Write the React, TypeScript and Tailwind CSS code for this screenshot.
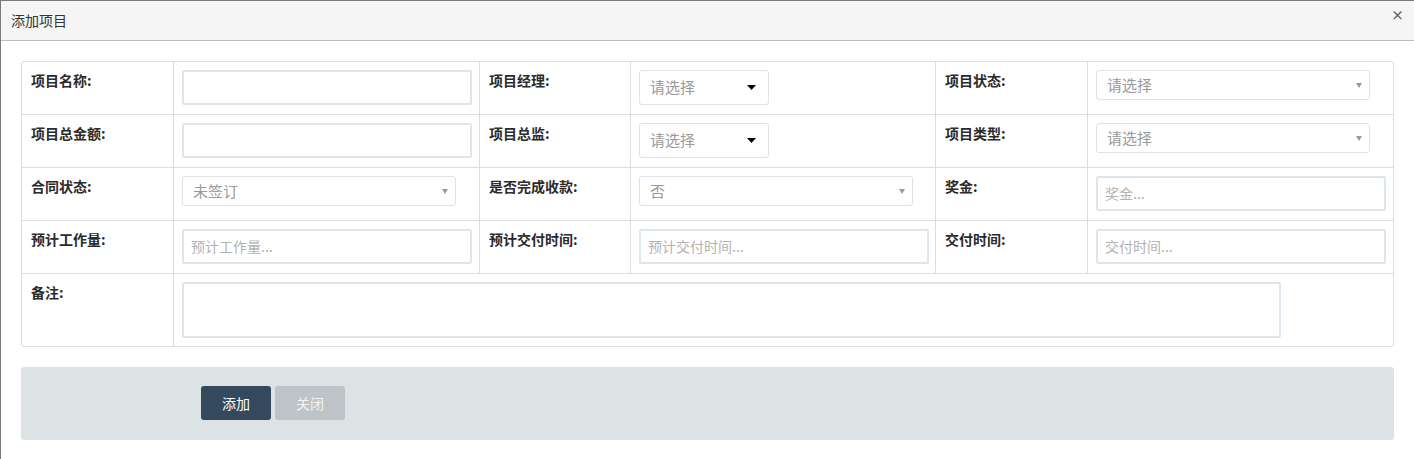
import React from "react";

// add-project dialog: header, 6-column form grid, footer with buttons

const font = { fontFamily: '"Noto Sans CJK SC", "Noto Sans", sans-serif' };

const Label = ({ text, last }: { text: string; last?: boolean }) => (
  <div className={`border-r border-[#ddd] pl-[9px] pt-[8px] text-[14px] leading-[20px] font-bold text-[#2b2b2b] ${last ? "" : "border-b"}`}>
    {text}
  </div>
);

const Cell = ({ children, end, last }: { children?: React.ReactNode; end?: boolean; last?: boolean }) => (
  <div className={`border-[#ddd] px-[8px] pt-[8px] ${end ? "" : "border-r"} ${last ? "" : "border-b"}`}>{children}</div>
);

const TextInput = ({ placeholder = "" }: { placeholder?: string }) => (
  <div className="h-[35px] w-[290px] rounded-[2px] border-2 border-[#dde5ed] bg-white flex items-center pl-[7px] text-[14px] text-[#b2b2b2]">
    {placeholder}
  </div>
);

// select2-like dropdown with black caret
const Picker = () => (
  <div className="h-[35px] w-[130px] rounded-[3px] border border-[#dde3e8] bg-white flex items-center justify-between pl-[10px] pr-[12px] text-[15px] text-[#999]">
    <span>请选择</span>
    <svg width="9" height="5" viewBox="0 0 9 5">
      <path d="M0 0 L9 0 L4.5 5 Z" fill="#000" />
    </svg>
  </div>
);

// native-looking select with grey arrow
const Select = ({ value }: { value: string }) => (
  <div className="h-[30px] w-[274px] rounded-[3px] border border-[#dde3e8] bg-white flex items-center justify-between pl-[10px] pr-[7px] text-[15px] text-[#999]">
    <span>{value}</span>
    <svg width="6" height="6" viewBox="0 0 6 6">
      <path d="M0 1 L6 1 L3 6 Z" fill="#999" />
    </svg>
  </div>
);

export default function App() {
  return (
    <div style={font} className="w-[1414px] h-[459px] overflow-hidden bg-white border-l border-t border-[#7a7a7a]">
      <div className="h-[40px] bg-[#f5f5f5] border-b border-[#b7c1ca] flex items-center justify-between pl-[10px] pr-[10px]">
        <span className="text-[14px] text-[#333]">添加项目</span>
        <span className="text-[13px] leading-none font-bold text-[#666] -mt-[12px]">×</span>
      </div>

      <div className="pl-[20px] pt-[20px]">
        <div className="w-[1373px] rounded-[3px] border border-[#ddd] grid grid-cols-[152px_306px_151px_305px_152px_305px] grid-rows-[53px_53px_53px_53px_72px]">
          <Label text="项目名称:" />
          <Cell><TextInput /></Cell>
          <Label text="项目经理:" />
          <Cell><Picker /></Cell>
          <Label text="项目状态:" />
          <Cell end><Select value="请选择" /></Cell>

          <Label text="项目总金额:" />
          <Cell><TextInput /></Cell>
          <Label text="项目总监:" />
          <Cell><Picker /></Cell>
          <Label text="项目类型:" />
          <Cell end><Select value="请选择" /></Cell>

          <Label text="合同状态:" />
          <Cell><Select value="未签订" /></Cell>
          <Label text="是否完成收款:" />
          <Cell><Select value="否" /></Cell>
          <Label text="奖金:" />
          <Cell end><TextInput placeholder="奖金..." /></Cell>

          <Label text="预计工作量:" />
          <Cell><TextInput placeholder="预计工作量..." /></Cell>
          <Label text="预计交付时间:" />
          <Cell><TextInput placeholder="预计交付时间..." /></Cell>
          <Label text="交付时间:" />
          <Cell end><TextInput placeholder="交付时间..." /></Cell>

          <Label text="备注:" last />
          <div className="col-span-5 px-[8px] pt-[8px]">
            <div className="h-[56px] w-[1099px] rounded-[2px] border-2 border-[#dde5ed] bg-white" />
          </div>
        </div>

        <div className="mt-[20px] w-[1373px] h-[73px] rounded-[3px] bg-[#dce3e5] flex items-start gap-[4px] pl-[180px] pt-[19px]">
          <button className="h-[34px] w-[70px] rounded-[3px] bg-[#34495e] text-white text-[14px]">添加</button>
          <button className="h-[34px] w-[70px] rounded-[3px] bg-[#bdc3c7] text-[#f4f4f4] text-[14px]">关闭</button>
        </div>
      </div>
    </div>
  );
}
